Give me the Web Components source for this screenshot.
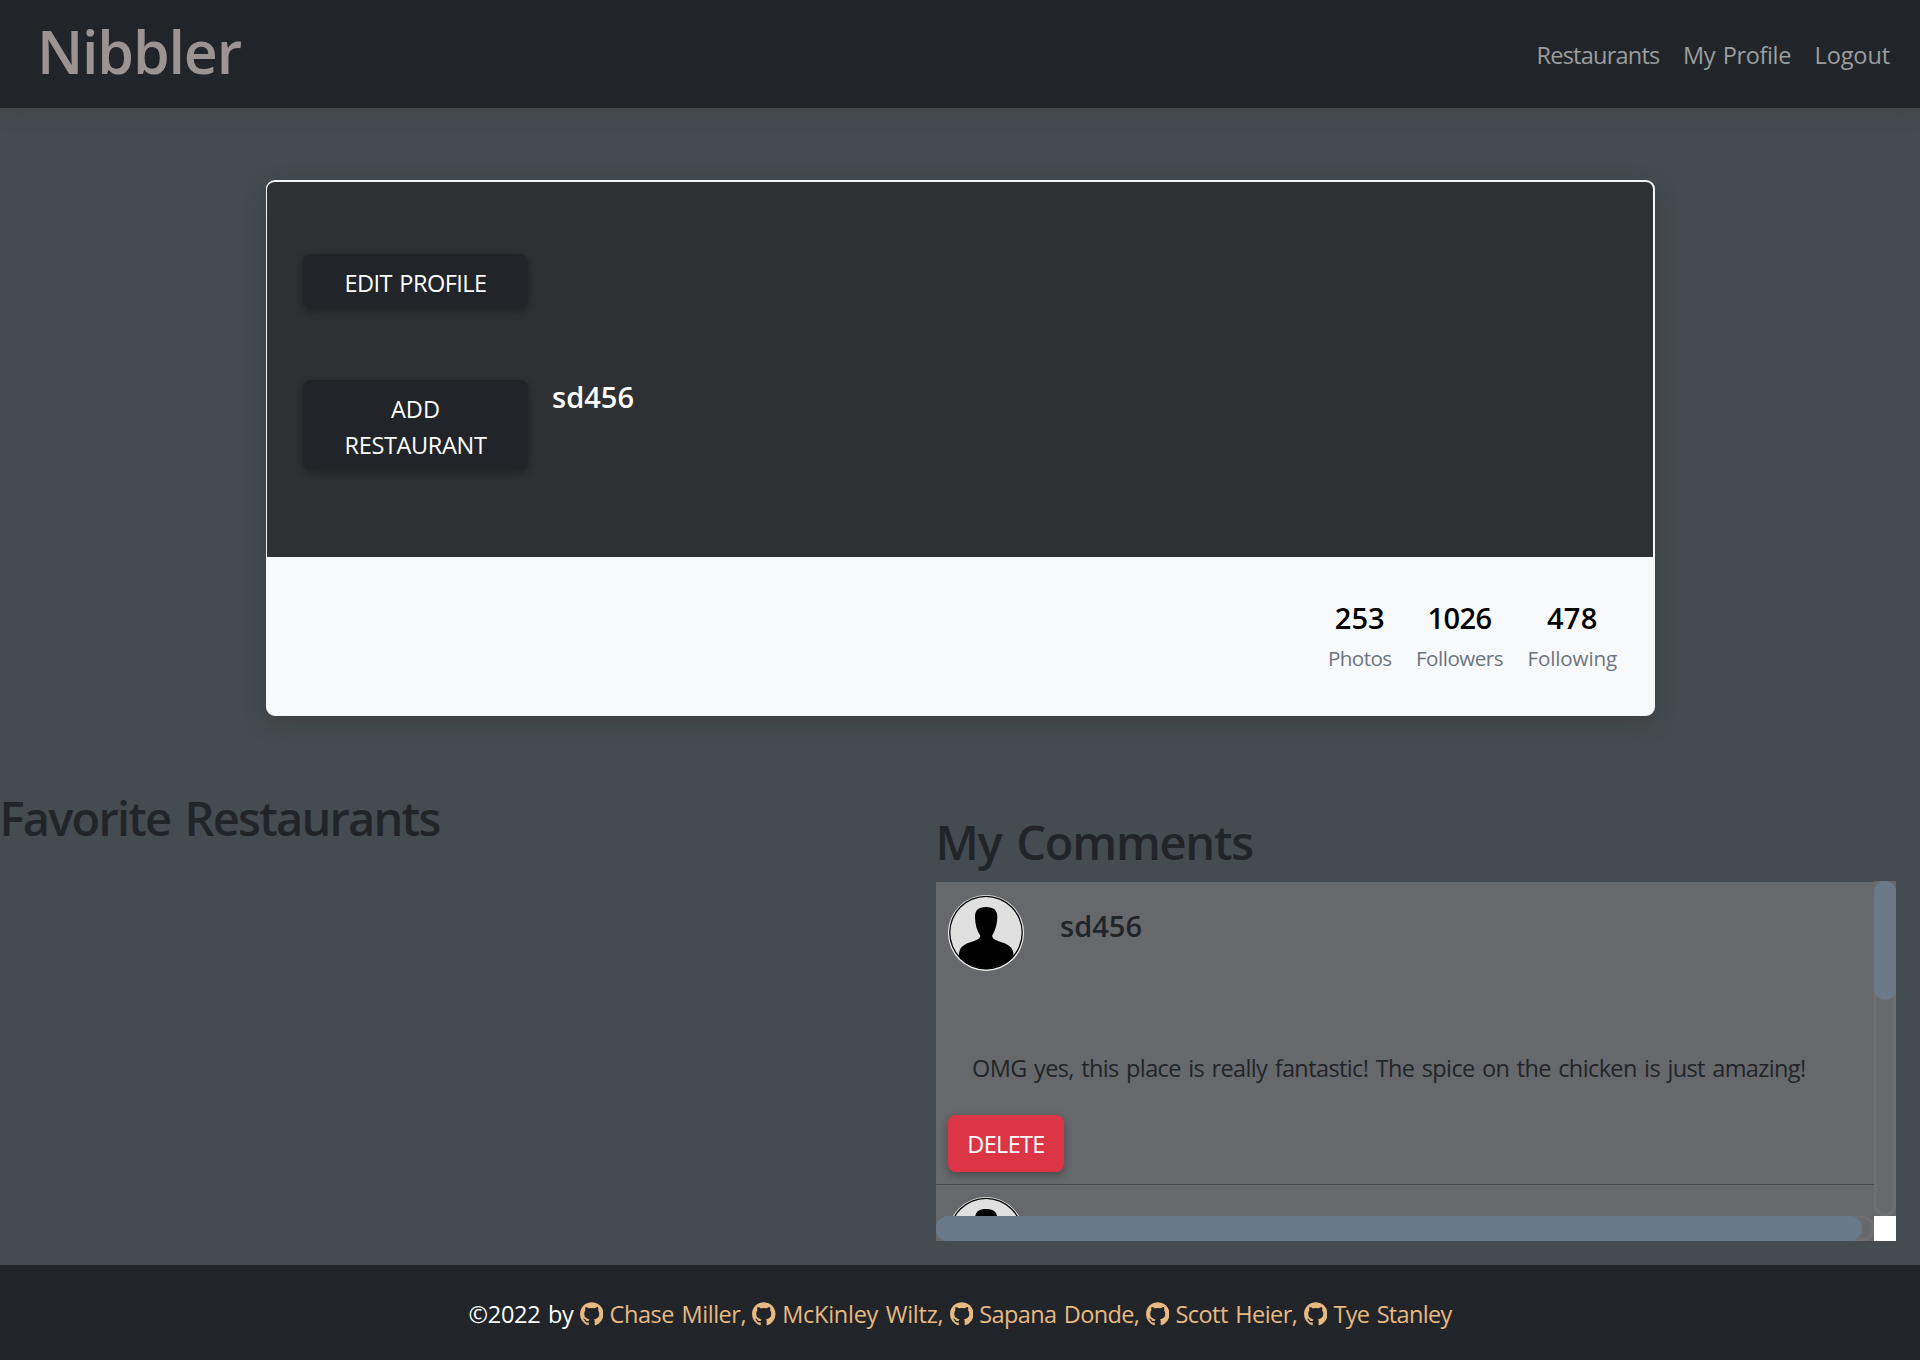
<!DOCTYPE html>
<html lang="en">
<head>
<meta charset="utf-8">
<title>Nibbler</title>
<style>
html,body{margin:0;height:100%}
body{background:#444b51;font-family:"Open Sans","Noto Sans",sans-serif;font-size:23.5px;line-height:36px;color:#212529;overflow:hidden}
</style>
</head>
<body>
<nibbler-app></nibbler-app>
<script>
const define = (name, html, setup) => customElements.define(name, class extends HTMLElement {
  connectedCallback() {
    if (this.shadowRoot) return;
    this.attachShadow({ mode: 'open' }).innerHTML = html;
    if (setup) setup(this, this.shadowRoot);
  }
});

/* A single line of text tracked to a fixed advance width. */
define('fit-text', `<style>:host{display:block;white-space:nowrap;flex:none;word-spacing:.08em}span{display:inline-block}</style><span><slot></slot></span>`,
  (el, root) => {
    const w = parseFloat(el.getAttribute('w'));
    const span = root.querySelector('span');
    el.style.width = w + 'px';
    const n = el.textContent.length;
    const ls = (w - span.getBoundingClientRect().width) / n;
    span.style.letterSpacing = ls.toFixed(3) + 'px';
  });

define('github-icon', `<style>:host{display:block;flex:none;width:23.5px;height:24px}svg{display:block;width:100%;height:100%}</style>
<svg viewBox="128 128 1536 1536" fill="currentColor"><path d="M896 128q209 0 385.500 103t279.500 279.500 103 385.500q0 251-146.500 451.500t-378.500 277.500q-27 5-40-7t-13-30q0-3 .5-76.500t.5-134.500q0-97-52-142 57-6 102.500-18t94-39 81-66.500 53-105 20.500-150.500q0-119-79-206 37-91-8-204-28-9-81 11t-92 44l-38 24q-93-26-192-26t-192 26q-16-11-42.500-27t-83.500-38.500-85-13.500q-45 113-8 204-79 87-79 206 0 85 20.500 150t52.500 105 80.500 67 94 39 102.500 18q-39 36-49 103-21 10-45 15t-57 5-65.500-21.500-55.500-62.500q-19-32-48.500-52t-49.500-24l-20-3q-21 0-29 4.500t-5 11.500 9 14 13 12l7 5q22 10 43.500 38t31.500 51l10 23q13 38 44 61.500t67 30 69.500 7 55.500-3.500l23-4q0 38 .5 88.500t.5 54.500q0 18-13 30t-40 7q-232-77-378.500-277.500t-146.500-451.500q0-209 103-385.500t279.500-279.500 385.500-103z"/></svg>`);

define('user-avatar', `<style>:host{display:block;flex:none;width:76px;height:76px}svg{display:block}</style>
<svg width="76" height="76" viewBox="0 0 76 76"><defs><clipPath id="c"><circle cx="38" cy="37.700" r="36.500"/></clipPath></defs>
<circle cx="38" cy="38" r="38" fill="#f8f8f8"/><circle cx="38" cy="37.600" r="36.900" fill="#000"/><circle cx="38" cy="37.600" r="35.600" fill="#e0e0e0"/>
<path clip-path="url(#c)" d="M38 12C46 12 49.500 15.500 49.300 22C49.100 30 47 36 44.200 40.500C44 43 46 44.500 50 46C60 49 66 52 65.500 61L60 68L38 75L16 68L11 61C10.500 52 16 49 26 46C30 44.500 32.500 43 32.200 40.500C29 36 27.200 30 27 22C27 15.500 30 12 38 12Z"/></svg>`);

define('app-button', `<style>:host{display:block;box-sizing:border-box;border-radius:8px;background:var(--bg,#212529);color:#fff;box-shadow:0 3px 8px rgba(0,0,0,.3);padding:11px 0 7px}
div{display:flex;flex-direction:column;align-items:center}</style><div><slot></slot></div>`);

define('app-header', `<style>:host{display:flex;justify-content:space-between;align-items:center;box-sizing:border-box;height:108px;background:#212529;padding:0 30px 0 37px;box-shadow:0 6px 15px rgba(70,68,62,.42);position:relative}
.brand{font-size:59px;font-weight:560;color:#9b9493;line-height:80px;padding-bottom:6px}
nav{display:flex;gap:23.500px;color:#9b9d9f;padding-top:2px}</style>
<fit-text class="brand" w="204">Nibbler</fit-text>
<nav><fit-text w="123">Restaurants</fit-text><fit-text w="108">My Profile</fit-text><fit-text w="75.500">Logout</fit-text></nav>`);

define('stat-item', `<style>:host{display:flex;flex-direction:column;align-items:center}
.n{font-size:29px;font-weight:560;color:#000;height:41.500px}.l{font-size:20.600px;line-height:32px;color:#6c757d}</style>
<fit-text class="n"></fit-text><fit-text class="l"></fit-text>`, (el, root) => {
  for (const k of ['n', 'l']) {
    const t = document.createElement('fit-text');
    t.className = k;
    t.setAttribute('w', el.getAttribute(k + 'w'));
    t.textContent = el.getAttribute(k);
    root.querySelector('.' + k).replaceWith(t);
  }
});

define('profile-card', `<style>:host{display:block;box-sizing:border-box;width:1389px;height:536px;margin:72px 0 0 266px;background:#f8f9fb;border:solid #f4f4f4;border-width:2px 2px 1px 1px;border-radius:9px;box-shadow:0 6px 18px rgba(62,57,52,.65);overflow:hidden}
.top{background:#2d3133;height:375px;box-sizing:border-box;padding:72px 36px;display:flex;gap:24px}
.col{width:225px;display:flex;flex-direction:column;gap:72px}
.name{font-size:29px;font-weight:560;color:#fff;padding-top:125px}
.stats{display:flex;justify-content:flex-end;gap:24.500px;padding:43px 36px 0 0}</style>
<div class="top"><div class="col"><app-button><fit-text w="142">EDIT PROFILE</fit-text></app-button>
<app-button><fit-text w="49">ADD</fit-text><fit-text w="142">RESTAURANT</fit-text></app-button></div>
<fit-text class="name" w="82">sd456</fit-text></div>
<div class="stats"><stat-item n="253" nw="50" l="Photos" lw="63.500"></stat-item><stat-item n="1026" nw="64" l="Followers" lw="87"></stat-item><stat-item n="478" nw="50.500" l="Following" lw="89.500"></stat-item></div>`);

/* With the "peek" attribute only the avatar row is rendered. */
define('comment-item', `<style>:host{display:block;box-sizing:border-box;height:302px;padding:12px 12px 0;border-bottom:1px solid #464648}
.head{display:flex;gap:36px;height:155px}.name{font-size:29px;font-weight:560;padding-top:13px}
.text{padding-left:24px;height:65px}app-button{--bg:#dc3545;width:116px;height:57px}</style>
<div class="head"><user-avatar></user-avatar><fit-text class="name full" w="82">sd456</fit-text></div>
<fit-text class="text full" w="833.500">OMG yes, this place is really fantastic! The spice on the chicken is just amazing!</fit-text>
<app-button class="full"><fit-text w="77.500">DELETE</fit-text></app-button>`, (el, root) => {
  if (el.hasAttribute('peek')) root.querySelectorAll('.full').forEach(n => n.remove());
});

define('comment-panel', `<style>:host{display:grid;grid-template:334px 25px/938px 22px;width:960px;background:#67686b}
.list{overflow:hidden;padding-top:1px;box-sizing:border-box}
.track{box-shadow:inset 0 0 5px #808080;background:#67686b;border-radius:12px;box-sizing:border-box;height:100%}
.v{background:#67686b;margin-top:-1px}.thumb{background:#6b7a88;border-radius:12px}
.v .thumb{height:119px;border-radius:11px}.h .thumb{width:926px;height:25px}.corner{background:#fff}</style>
<div class="list"><comment-item></comment-item><comment-item peek></comment-item></div>
<div class="v"><div class="track"><div class="thumb"></div></div></div>
<div class="h"><div class="track"><div class="thumb"></div></div></div><div class="corner"></div>`);

define('app-footer', `<style>:host{display:flex;justify-content:center;align-items:center;gap:6.300px;height:95px;box-sizing:border-box;background:#212529;color:#e8b981;padding-top:2px}
.by{color:#fff}fit-text{padding-top:1px}</style>
<fit-text class="by" w="105">©2022 by</fit-text>
<github-icon></github-icon><fit-text w="136.500">Chase Miller,</fit-text>
<github-icon></github-icon><fit-text w="161">McKinley Wiltz,</fit-text>
<github-icon></github-icon><fit-text w="160">Sapana Donde,</fit-text>
<github-icon></github-icon><fit-text w="122">Scott Heier,</fit-text>
<github-icon></github-icon><fit-text w="118">Tye Stanley</fit-text>`);

define('nibbler-app', `<style>:host{display:flex;flex-direction:column;height:1360px}
main{flex:1}.cols{display:flex;padding-top:73px}.cols>section{width:936px}
.t{font-size:47px;font-weight:560;line-height:58px;margin-left:-.5px}.r{padding-top:24px}.r .t{padding-bottom:11px}</style>
<app-header></app-header>
<main><profile-card></profile-card>
<div class="cols"><section><fit-text class="t" w="440">Favorite Restaurants</fit-text></section>
<section class="r"><fit-text class="t" w="317.500">My Comments</fit-text><comment-panel></comment-panel></section></div></main>
<app-footer></app-footer>`);
</script>
</body>
</html>
